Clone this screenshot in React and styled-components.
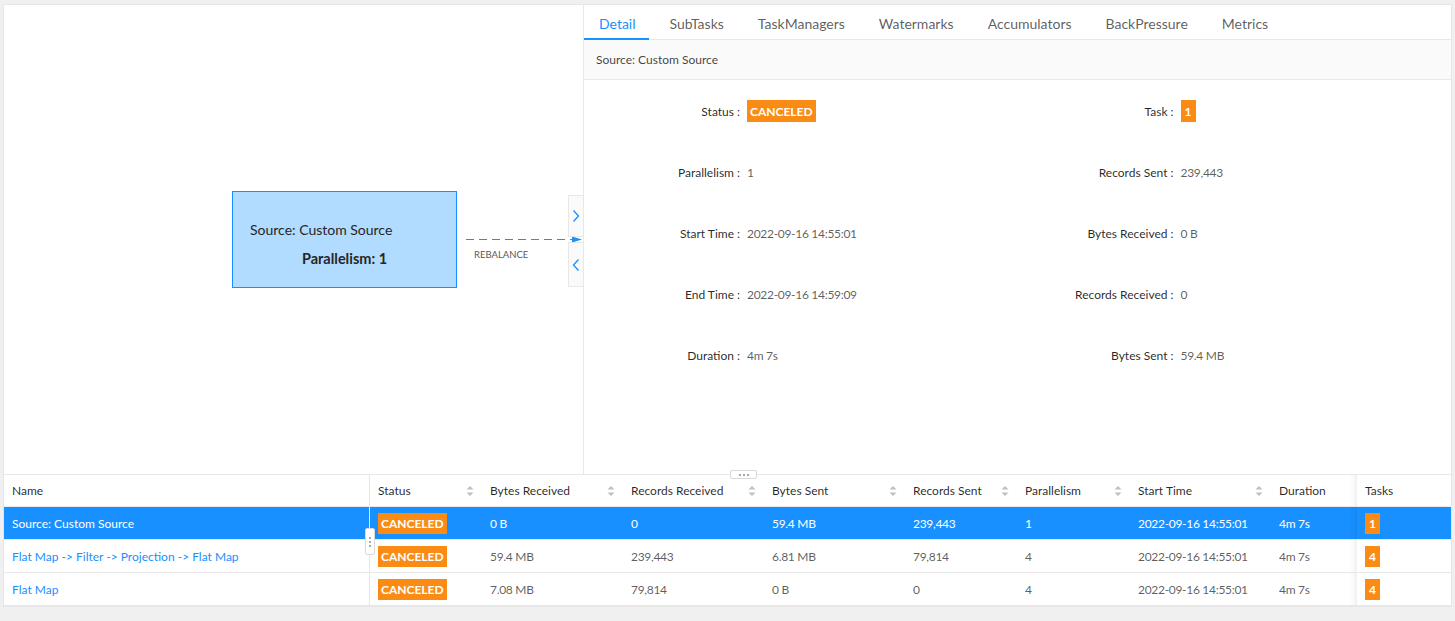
import React from 'react';
import styled, { createGlobalStyle } from 'styled-components';

const GlobalStyle = createGlobalStyle`
  html, body { margin: 0; padding: 0; background: #f0f0f0; }
  body { font-family: Lato, "Open Sans", sans-serif; color: rgba(0,0,0,.65); }
  * { box-sizing: border-box; }
`;

const Page = styled.div`
  padding: 4px 3px 16px 3px;
`;

const Card = styled.div`
  background: #fff;
  border: 1px solid #e6e6e6;
  display: flex;
  flex-direction: column;
`;

const Top = styled.div`
  display: flex;
  height: 469px;
`;

const Canvas = styled.div`
  position: relative;
  width: 579px;
  flex: none;
  overflow: hidden;
`;

const Node = styled.div`
  position: absolute;
  left: 228px;
  top: 186px;
  width: 225px;
  height: 97px;
  background: #b1dbff;
  border: 1px solid #1890ff;
  padding: 28px 0 0 17px;
  color: #262626;
  font-size: 14px;
`;

const NodeTitle = styled.div`
  line-height: 20px;
`;

const NodeSub = styled.div`
  line-height: 20px;
  margin-top: 9px;
  text-align: center;
  font-weight: 700;
  font-size: 14.5px;
  padding-right: 17px;
`;

const EdgeSvg = styled.svg`
  position: absolute;
  left: 0;
  top: 0;
  width: 579px;
  height: 468px;
  pointer-events: none;
`;

const EdgeLabel = styled.text`
  font-size: 9.5px;
  fill: #595959;
  font-family: Lato, sans-serif;
`;

const Toggle = styled.div`
  position: absolute;
  right: 0;
  top: ${p => p.$top}px;
  width: 15px;
  height: ${p => p.$h}px;
  background: #fafafa;
  border: 1px solid #e8e8e8;
  border-right: none;
  display: flex;
  align-items: center;
  justify-content: center;
`;

const Panel = styled.div`
  flex: 1;
  min-width: 0;
  border-left: 1px solid #e8e8e8;
  display: flex;
  flex-direction: column;
`;

const TabBar = styled.div`
  display: flex;
  gap: 4px;
  height: 35px;
  border-bottom: 1px solid #e8e8e8;
`;

const Tab = styled.div`
  position: relative;
  padding: 2px 15px 0;
  display: flex;
  align-items: center;
  font-size: 14px;
  color: ${p => (p.$active ? '#1890ff' : 'rgba(0,0,0,.65)')};
  &::after {
    content: '';
    display: ${p => (p.$active ? 'block' : 'none')};
    position: absolute;
    left: 0;
    right: 2px;
    bottom: -1px;
    height: 2px;
    background: #1890ff;
  }
`;

const TitleBar = styled.div`
  height: 40px;
  background: #fafafa;
  border-bottom: 1px solid #e8e8e8;
  display: flex;
  align-items: center;
  padding-left: 12px;
  font-size: 12px;
  color: rgba(0,0,0,.75);
`;

const DetailGrid = styled.div`
  display: grid;
  grid-template-columns: 1fr 1fr;
  row-gap: 39px;
  padding-top: 20px;
`;

const Item = styled.div`
  display: flex;
  align-items: center;
  height: 22px;
  font-size: 12px;
`;

const Label = styled.div`
  width: 156px;
  text-align: right;
  color: rgba(0,0,0,.85);
  &::after {
    content: ':';
    margin-left: 3px;
  }
`;

const Value = styled.div`
  margin-left: 7px;
  display: flex;
  align-items: center;
  letter-spacing: ${p => (p.$num ? '-0.3px' : 'normal')};
`;

const Badge = styled.span`
  display: inline-flex;
  align-items: center;
  justify-content: center;
  height: ${p => p.$h || 22}px;
  padding: 0 3px;
  min-width: 15px;
  background: #fa8c16;
  color: #fff;
  font-weight: 700;
  font-size: 12px;
  letter-spacing: 0;
`;

const TableWrap = styled.div`
  position: relative;
  border-top: 1px solid #e8e8e8;
`;

const cols = '366px 112px 141px 141px 141px 112px 113px 141px 86px 1fr';

const Row = styled.div`
  display: grid;
  grid-template-columns: ${cols};
  height: ${p => (p.$head ? 32 : 33)}px;
  border-bottom: 1px solid #e8e8e8;
  background: ${p => (p.$selected ? '#1890ff' : '#fff')};
  color: ${p => (p.$selected ? '#fff' : p.$head ? 'rgba(0,0,0,.85)' : 'rgba(0,0,0,.65)')};
  font-size: 12px;
  &:last-child { border-bottom: none; }
`;

const Cell = styled.div`
  position: relative;
  display: flex;
  align-items: center;
  justify-content: space-between;
  padding: 0 8px;
  white-space: nowrap;
  letter-spacing: ${p => (p.$num ? '-0.3px' : 'normal')};
  ${p => p.$divider && 'border-right: 1px solid #e8e8e8;'}
  ${p => p.$fixed && `
    &::before {
      content: '';
      position: absolute;
      left: -10px;
      top: 0;
      bottom: 0;
      width: 10px;
      box-shadow: inset -8px 0 8px -8px rgba(0,0,0,.12);
    }
  `}
`;

const NameLink = styled.span`
  color: ${p => (p.$selected ? '#fff' : '#1890ff')};
`;

const ColHandle = styled.div`
  position: absolute;
  left: 361px;
  top: 53px;
  width: 10px;
  height: 27px;
  background: #fff;
  border: 1px solid #d9d9d9;
  border-radius: 2px;
  display: flex;
  flex-direction: column;
  align-items: center;
  justify-content: center;
  gap: 2px;
`;

const RowHandle = styled.div`
  position: absolute;
  left: 726px;
  top: -5px;
  width: 27px;
  height: 9px;
  background: #fff;
  border: 1px solid #d9d9d9;
  border-radius: 2px;
  display: flex;
  align-items: center;
  justify-content: center;
  gap: 2px;
`;

const Dot = styled.span`
  width: 2px;
  height: 2px;
  border-radius: 50%;
  background: #8c8c8c;
`;

const SortIcon = () => (
  <svg width="8" height="12" viewBox="0 0 8 12">
    <polygon points="0.5,4.5 4,1 7.5,4.5" fill="#bfbfbf" />
    <polygon points="0.5,7.5 4,11 7.5,7.5" fill="#bfbfbf" />
  </svg>
);

const Chevron = ({ dir }) => (
  <svg width="8" height="14" viewBox="0 0 8 14">
    <polyline
      points={dir === 'right' ? '1.5,1.5 6.5,7 1.5,12.5' : '6.5,1.5 1.5,7 6.5,12.5'}
      fill="none"
      stroke="#1890ff"
      strokeWidth="1.3"
    />
  </svg>
);

const tabs = ['Detail', 'SubTasks', 'TaskManagers', 'Watermarks', 'Accumulators', 'BackPressure', 'Metrics'];

const details = [
  ['Status', <Badge key="s">CANCELED</Badge>],
  ['Task', <Badge key="t">1</Badge>],
  ['Parallelism', '1'],
  ['Records Sent', '239,443'],
  ['Start Time', '2022-09-16 14:55:01'],
  ['Bytes Received', '0 B'],
  ['End Time', '2022-09-16 14:59:09'],
  ['Records Received', '0'],
  ['Duration', '4m 7s'],
  ['Bytes Sent', '59.4 MB'],
];

const headers = [
  ['Name', false],
  ['Status', true],
  ['Bytes Received', true],
  ['Records Received', true],
  ['Bytes Sent', true],
  ['Records Sent', true],
  ['Parallelism', true],
  ['Start Time', true],
  ['Duration', false],
  ['Tasks', false],
];

const rows = [
  { name: 'Source: Custom Source', br: '0 B', rr: '0', bs: '59.4 MB', rs: '239,443', p: '1', t: '1', selected: true },
  { name: 'Flat Map -> Filter -> Projection -> Flat Map', br: '59.4 MB', rr: '239,443', bs: '6.81 MB', rs: '79,814', p: '4', t: '4' },
  { name: 'Flat Map', br: '7.08 MB', rr: '79,814', bs: '0 B', rs: '0', p: '4', t: '4' },
];

export default function App() {
  return (
    <>
      <GlobalStyle />
      <Page>
        <Card>
          <Top>
            <Canvas>
              <EdgeSvg viewBox="0 0 579 468">
                <line x1="462" y1="234.5" x2="576" y2="234.5" stroke="#1890ff" strokeWidth="1" strokeDasharray="8 5" />
                <polygon points="568,231.5 578,234.5 568,237.5" fill="#1890ff" />
                <EdgeLabel x="470" y="253">REBALANCE</EdgeLabel>
              </EdgeSvg>
              <Node>
                <NodeTitle>Source: Custom Source</NodeTitle>
                <NodeSub>Parallelism: 1</NodeSub>
              </Node>
              <Toggle $top={190} $h={42}>
                <Chevron dir="right" />
              </Toggle>
              <Toggle $top={237} $h={45}>
                <Chevron dir="left" />
              </Toggle>
            </Canvas>
            <Panel>
              <TabBar>
                {tabs.map((t, i) => (
                  <Tab key={t} $active={i === 0}>{t}</Tab>
                ))}
              </TabBar>
              <TitleBar>Source: Custom Source</TitleBar>
              <DetailGrid>
                {details.map(([l, v]) => (
                  <Item key={l}>
                    <Label>{l}</Label>
                    <Value $num={typeof v === 'string'}>{v}</Value>
                  </Item>
                ))}
              </DetailGrid>
            </Panel>
          </Top>
          <TableWrap>
            <Row $head>
              {headers.map(([h, sort], i) => (
                <Cell key={h} $divider={i === 0} $fixed={i === 9}>
                  <span>{h}</span>
                  {sort && <SortIcon />}
                </Cell>
              ))}
            </Row>
            {rows.map(r => (
              <Row key={r.name} $selected={r.selected}>
                <Cell $divider>
                  <NameLink $selected={r.selected}>{r.name}</NameLink>
                </Cell>
                <Cell><Badge $h={21}>CANCELED</Badge></Cell>
                <Cell $num>{r.br}</Cell>
                <Cell $num>{r.rr}</Cell>
                <Cell $num>{r.bs}</Cell>
                <Cell $num>{r.rs}</Cell>
                <Cell $num>{r.p}</Cell>
                <Cell $num>2022-09-16 14:55:01</Cell>
                <Cell $num>4m 7s</Cell>
                <Cell $fixed><Badge $h={21}>{r.t}</Badge></Cell>
              </Row>
            ))}
            <RowHandle><Dot /><Dot /><Dot /></RowHandle>
            <ColHandle><Dot /><Dot /><Dot /></ColHandle>
          </TableWrap>
        </Card>
      </Page>
    </>
  );
}
